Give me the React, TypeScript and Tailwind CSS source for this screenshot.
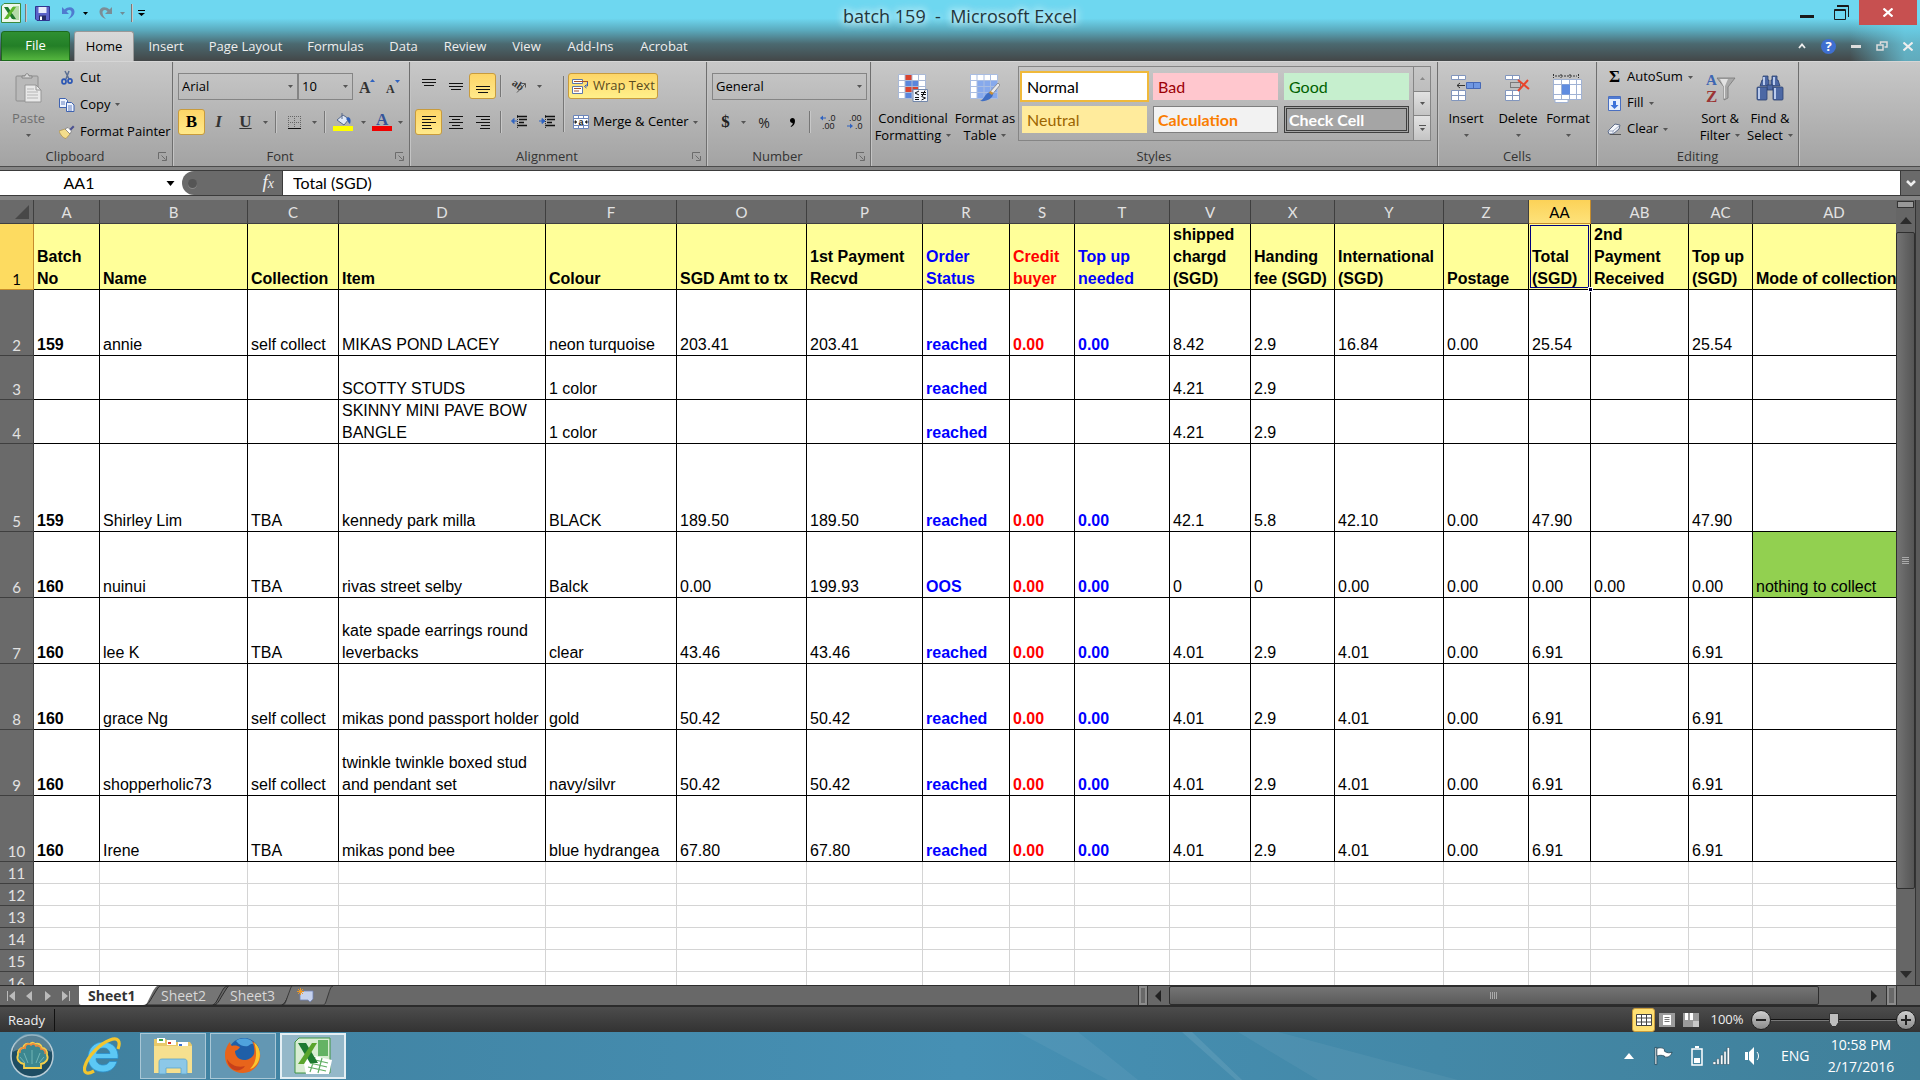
import React from 'react';
import clsx from 'clsx';

/* ---------- data ---------- */

const tabs = [
    { label: 'Insert', width: 'w-[60px]' },
    { label: 'Page Layout', width: 'w-[99px]' },
    { label: 'Formulas', width: 'w-[81px]' },
    { label: 'Data', width: 'w-[55px]' },
    { label: 'Review', width: 'w-[68px]' },
    { label: 'View', width: 'w-[55px]' },
    { label: 'Add-Ins', width: 'w-[73px]' },
    { label: 'Acrobat', width: 'w-[74px]' },
];

const columns = [
    { id: 'A', width: 'w-[66px]', title: 'Batch\nNo' },
    { id: 'B', width: 'w-[148px]', title: 'Name' },
    { id: 'C', width: 'w-[91px]', title: 'Collection' },
    { id: 'D', width: 'w-[207px]', title: 'Item' },
    { id: 'F', width: 'w-[131px]', title: 'Colour' },
    { id: 'O', width: 'w-[130px]', title: 'SGD Amt to tx' },
    { id: 'P', width: 'w-[116px]', title: '1st Payment\nRecvd' },
    { id: 'R', width: 'w-[87px]', title: 'Order\nStatus' },
    { id: 'S', width: 'w-[65px]', title: 'Credit\nbuyer' },
    { id: 'T', width: 'w-[95px]', title: 'Top up\nneeded' },
    { id: 'V', width: 'w-[81px]', title: 'shipped\nchargd\n(SGD)' },
    { id: 'X', width: 'w-[84px]', title: 'Handing\nfee (SGD)' },
    { id: 'Y', width: 'w-[109px]', title: 'International\n(SGD)' },
    { id: 'Z', width: 'w-[85px]', title: 'Postage' },
    { id: 'AA', width: 'w-[62px]', title: 'Total\n(SGD)' },
    { id: 'AB', width: 'w-[98px]', title: '2nd\nPayment\nReceived' },
    { id: 'AC', width: 'w-[64px]', title: 'Top up\n(SGD)' },
    { id: 'AD', width: '', title: 'Mode of collection' },
];

const rows = [
    { n: 2, h: 'h-[66px]', cells: ['159', 'annie', 'self collect', 'MIKAS POND LACEY', 'neon turquoise', '203.41', '203.41', 'reached', '0.00', '0.00', '8.42', '2.9', '16.84', '0.00', '25.54', '', '25.54', ''] },
    { n: 3, h: 'h-[44px]', cells: ['', '', '', 'SCOTTY STUDS', '1 color', '', '', 'reached', '', '', '4.21', '2.9', '', '', '', '', '', ''] },
    { n: 4, h: 'h-[44px]', cells: ['', '', '', 'SKINNY MINI PAVE BOW\nBANGLE', '1 color', '', '', 'reached', '', '', '4.21', '2.9', '', '', '', '', '', ''] },
    { n: 5, h: 'h-[88px]', cells: ['159', 'Shirley Lim', 'TBA', 'kennedy park milla', 'BLACK', '189.50', '189.50', 'reached', '0.00', '0.00', '42.1', '5.8', '42.10', '0.00', '47.90', '', '47.90', ''] },
    { n: 6, h: 'h-[66px]', cells: ['160', 'nuinui', 'TBA', 'rivas street selby', 'Balck', '0.00', '199.93', 'OOS', '0.00', '0.00', '0', '0', '0.00', '0.00', '0.00', '0.00', '0.00', 'nothing to collect'] },
    { n: 7, h: 'h-[66px]', cells: ['160', 'lee K', 'TBA', 'kate spade earrings round\nleverbacks', 'clear', '43.46', '43.46', 'reached', '0.00', '0.00', '4.01', '2.9', '4.01', '0.00', '6.91', '', '6.91', ''] },
    { n: 8, h: 'h-[66px]', cells: ['160', 'grace Ng', 'self collect', 'mikas pond passport holder', 'gold', '50.42', '50.42', 'reached', '0.00', '0.00', '4.01', '2.9', '4.01', '0.00', '6.91', '', '6.91', ''] },
    { n: 9, h: 'h-[66px]', cells: ['160', 'shopperholic73', 'self collect', 'twinkle twinkle boxed stud\nand pendant set', 'navy/silvr', '50.42', '50.42', 'reached', '0.00', '0.00', '4.01', '2.9', '4.01', '0.00', '6.91', '', '6.91', ''] },
    { n: 10, h: 'h-[66px]', cells: ['160', 'Irene', 'TBA', 'mikas pond bee', 'blue hydrangea', '67.80', '67.80', 'reached', '0.00', '0.00', '4.01', '2.9', '4.01', '0.00', '6.91', '', '6.91', ''] },
];

const emptyRows = [11, 12, 13, 14, 15, 16];

const colourOf = (id: string) => {
    if (id === 'R' || id === 'T') return 'text-[#0000ff]';
    if (id === 'S') return 'text-[#ff0000]';
    return 'text-black';
};

const isBold = (id: string) => ['A', 'R', 'S', 'T'].includes(id);

/* ---------- small pieces ---------- */

const Arrow = ({ className = 'text-[#555]' }: { className?: string }) => (
    <svg viewBox="0 0 5 3" className={clsx('h-[3px] w-[5px] shrink-0', className)} fill="currentColor">
        <path d="M0 0h5L2.5 3z" />
    </svg>
);

const Sep = ({ className = 'h-[22px]' }: { className?: string }) => (
    <span className={clsx('w-px shrink-0 bg-[#777] shadow-[1px_0_0_#c8c8c8]', className)} />
);

const Launcher = () => (
    <svg viewBox="0 0 9 9" className="h-[9px] w-[9px]" fill="none" stroke="#6b6b6b">
        <path d="M.5 7V.5H8M3.5 3.5l4 4M8.5 4v4.500H4" />
    </svg>
);

interface GroupProps {
    title: string;
    width: string;
    launcher?: boolean;
    children: React.ReactNode;
}

const Group: React.FC<GroupProps> = ({ title, width, launcher, children }) => (
    <section className={clsx('flex shrink-0 flex-col border-r border-[#6f6f6f] shadow-[1px_0_0_#c4c4c4]', width)}>
        <div className="flex h-[85px]">{children}</div>
        <div className="flex h-[20px] items-center text-[#333]">
            <span className="flex-1 text-center leading-[20px]">{title}</span>
            {launcher && (
                <span className="flex w-[22px] justify-end pr-[5px]">
                    <button aria-label={`${title} options`}><Launcher /></button>
                </span>
            )}
        </div>
    </section>
);

const BigButton = ({ icon, lines, arrow, width, dim }: { icon: React.ReactNode; lines: string[]; arrow?: boolean; width: string; dim?: boolean }) => (
    <button className={clsx('flex shrink-0 flex-col items-center pt-[10px] leading-[17px]', width, dim ? 'text-[#6f6f6f]' : 'text-black')}>
        <span className="mb-[6px] flex h-[32px] items-center">{icon}</span>
        <span className="whitespace-nowrap">{lines[0]}</span>
        <span className="flex h-[17px] items-center gap-[5px] whitespace-nowrap">
            {lines[1]}
            {arrow && <Arrow />}
        </span>
    </button>
);

const ToolButton = ({ label, active, width = 'w-[27px]', children }: { label: string; active?: boolean; width?: string; children: React.ReactNode }) => (
    <button
        aria-label={label}
        className={clsx(
            'flex h-[26px] shrink-0 items-center justify-center rounded-[3px] border',
            width,
            active ? 'border-[#c89b3c] bg-linear-to-b from-[#fdd567] to-[#ffe98a]' : 'border-transparent'
        )}
    >
        {children}
    </button>
);

const Combo = ({ label, value, width }: { label: string; value: string; width: string }) => (
    <label className={clsx('relative flex h-[27px] items-center border border-[#858585]', width)}>
        <select aria-label={label} className="h-full w-full appearance-none bg-transparent pl-[3px] leading-[17px] text-black outline-none">
            <option>{value}</option>
        </select>
        <span className="pointer-events-none absolute right-[4px] flex"><Arrow /></span>
    </label>
);

/* ---------- icons ---------- */

const Lines = ({ d }: { d: string }) => (
    <svg viewBox="0 0 16 14" className="h-[14px] w-[16px]" stroke="#111" strokeWidth="1" fill="none">
        <path d={d} />
    </svg>
);

const ExcelLogo = ({ className }: { className: string }) => (
    <svg viewBox="0 0 20 20" className={className}>
        <path d="M3 .5h16.500v19H.5V3z" fill="#eef7ec" stroke="#3c8a3c" />
        <path d="M12 3h6v14h-6z" fill="#b5dba8" />
        <path d="M3 4h4l8 12h-4z" fill="#1f7a2e" />
        <path d="M11.500 4H15L7 16H3z" fill="#5cb52d" />
    </svg>
);

const SaveIcon = () => (
    <svg viewBox="0 0 15 15" className="h-[15px] w-[15px]">
        <path d="M.5.5h14v14H2L.5 13z" fill="#5a62c8" stroke="#30358f" />
        <path d="M3.500 1h8v6h-8z" fill="#e8ecfa" />
        <path d="M4 9.500h7V14H4z" fill="#262b66" />
        <path d="M5 10.500h2V14H5z" fill="#fff" />
    </svg>
);

const UndoIcon = ({ color, flip }: { color: string; flip?: boolean }) => (
    <svg viewBox="0 0 13 14" className={clsx('h-[14px] w-[13px]', flip && '-scale-x-100')}>
        <path d="M0 1v7h7L4.500 5.500C7 3 9.500 4 9.500 6.500c0 2.500-1.500 4.500-3.500 6.500 4-1.500 6.500-4 6.500-7.500C12.500 1 6.500-.5 2.500 3.500z" fill={color} />
    </svg>
);

const PasteIcon = () => (
    <svg viewBox="0 0 28 30" className="h-[30px] w-[28px]">
        <rect x="1" y="3" width="22" height="25" rx="1" fill="#b9b9b9" stroke="#8e8e8e" />
        <path d="M7 5V3h3c0-3 4-3 4 0h3v2z" fill="#d8d8d8" stroke="#858585" />
        <path d="M10 12h11l5 5v12H10z" fill="#e9e9e9" stroke="#969696" />
        <path d="M21 12v5h5" fill="none" stroke="#969696" />
        <path d="M12 16h7M12 19h11M12 22h11M12 25h11" stroke="#b5b5b5" />
    </svg>
);

const CutIcon = () => (
    <svg viewBox="0 0 15 15" className="h-[15px] w-[15px]" fill="none">
        <path d="M5 1l4 8M9 1L6 9" stroke="#5b6f93" strokeWidth="1.500" />
        <ellipse cx="4" cy="11.500" rx="2" ry="2.400" stroke="#2c57b4" strokeWidth="1.700" />
        <ellipse cx="10" cy="11" rx="2" ry="2.200" stroke="#2c57b4" strokeWidth="1.700" />
    </svg>
);

const CopyIcon = () => (
    <svg viewBox="0 0 16 14" className="h-[14px] w-[16px]" fill="#eef3fd" stroke="#3f63b0">
        <path d="M.5.5h6l2 2v7h-8z" />
        <path d="M2 4h4M2 6h4" strokeWidth=".8" />
        <path d="M7.500 4.500h5l2.500 2.500v6.500H7.500z" />
        <path d="M9 8h4M9 10h4M9 12h4" strokeWidth=".8" />
    </svg>
);

const PainterIcon = () => (
    <svg viewBox="0 0 16 14" className="h-[14px] w-[16px]">
        <path d="M0 6l6-2 5 5-4 4.500C4 13 1.500 10 0 6z" fill="#f3dd8c" stroke="#a8873c" strokeWidth=".6" />
        <path d="M6 4l3-1.500L12.500 6 11 9z" fill="#fff" stroke="#666" strokeWidth=".6" />
        <path d="M10.500 4L14 .5 15.500 2 12 5.500z" fill="#4a5090" />
    </svg>
);

const GrowIcon = ({ up }: { up?: boolean }) => (
    <svg viewBox="0 0 16 16" className="h-[16px] w-[16px] overflow-visible">
        <text x="0" y="14" fontSize={up ? 16 : 12} fontFamily="Liberation Serif, serif" fontWeight="bold" fill="#333">A</text>
        {up ? <path d="M11 3h5l-2.500-3z" fill="#2f62c0" /> : <path d="M9 1h5l-2.500 3z" fill="#2f62c0" />}
    </svg>
);

const BorderIcon = () => (
    <svg viewBox="0 0 13 13" className="h-[13px] w-[13px]" stroke="#666" fill="none">
        <path d="M.5 0v12M6.500 0v12M12.500 0v12M0 .5h13M0 6.500h13" strokeDasharray="1 1" />
        <path d="M0 12.500h13" stroke="#111" />
    </svg>
);

const FillIcon = () => (
    <svg viewBox="0 0 20 18" className="h-[18px] w-[20px]">
        <path d="M4 7l6-5 6 4-5 6z" fill="#dfe8f7" stroke="#56698c" />
        <path d="M9 0v6" stroke="#56698c" />
        <path d="M15 4c3 1 3 4 2 7-2-1-2-4-4-5z" fill="#2f5fb8" />
        <path d="M0 13h20v5H0z" fill="#ffff00" />
    </svg>
);

const FontColourIcon = () => (
    <svg viewBox="0 0 20 18" className="h-[18px] w-[20px] overflow-visible">
        <text x="4" y="12" fontSize="17" fontFamily="Liberation Serif, serif" fontWeight="bold" fill="#35549a">A</text>
        <path d="M0 13h20v5H0z" fill="#f00000" />
    </svg>
);

const OrientIcon = () => (
    <svg viewBox="0 0 16 14" className="h-[14px] w-[16px] overflow-visible">
        <text x="0" y="8" fontSize="11" fontFamily="Liberation Serif, serif" fontWeight="bold" fill="#333" transform="rotate(35 4 7)">ab</text>
        <path d="M6 13.500L14 5M14.500 4.500v4M14.500 4.500h-4" stroke="#555" fill="none" />
    </svg>
);

const IndentIcon = ({ right }: { right?: boolean }) => (
    <svg viewBox="0 0 16 14" className="h-[14px] w-[16px]" fill="none">
        <path d="M6 1.500h10M8 4.500h8M8 7.500h5M6 10.500h10" stroke="#111" strokeWidth="1.400" />
        <path d="M6.500 0v14" stroke="#333" strokeDasharray="1 1" />
        {right ? <path d="M0 6h3M3 3.500L6 6 3 8.500z" stroke="#2f62c0" fill="#2f62c0" /> : <path d="M3 6h3M3 3.500L.5 6 3 8.500z" stroke="#2f62c0" fill="#2f62c0" />}
    </svg>
);

const WrapIcon = () => (
    <svg viewBox="0 0 17 15" className="h-[15px] w-[17px]">
        <path d="M.5.5h10v4H.5zM.5 7.500h10v7H.5z" fill="#fff" stroke="#5d76a8" />
        <path d="M2 2.500h14" stroke="#a6532a" />
        <path d="M2 9.500h7M2 12h5" stroke="#a6532a" />
        <path d="M15.500 3v4h-2M14.500 5.500L12.500 7.500l2 1.500" stroke="#3a5db0" fill="none" />
    </svg>
);

const MergeIcon = () => (
    <svg viewBox="0 0 16 14" className="h-[14px] w-[16px]">
        <path d="M.5.5h15v13H.5zM.5 3.500h15M.5 10.500h15M5.500.5v3M10.500.5v3M5.500 10.500v3M10.500 10.500v3" fill="#fff" stroke="#6c86bb" />
        <path d="M0 7h3M13 7h3M2 5.500L4 7 2 8.500zM14 5.500L12 7l2 1.500z" stroke="#222" strokeWidth=".6" fill="#222" />
        <text x="5.500" y="9.500" fontSize="9" fontFamily="Liberation Sans, sans-serif" fontWeight="bold" fill="#222">a</text>
    </svg>
);

const DecimalIcon = ({ more }: { more?: boolean }) => (
    <svg viewBox="0 0 16 14" className="h-[14px] w-[16px] overflow-visible" fontSize="9" fontFamily="Liberation Sans, sans-serif" fill="#222">
        <text x={more ? 8 : 2} y="6">{more ? '.0' : '.00'}</text>
        <text x={more ? 2 : 8} y="14">{more ? '.00' : '.0'}</text>
        {more ? <path d="M0 3l3-2.500v2h3v1H3v2z" fill="#2f62c0" /> : <path d="M6 11L3 8.500v2H0v1h3v2z" fill="#2f62c0" />}
    </svg>
);

const CondIcon = () => (
    <svg viewBox="0 0 30 28" className="h-[28px] w-[30px]">
        <path d="M.5.5h27v24H.5z" fill="#fff" />
        <path d="M7 0h7v6H7zM7 12h13v6H7z" fill="#d9432d" />
        <path d="M7 6h13v6H7zM7 18h7v6H7z" fill="#5a86dc" />
        <path d="M.5.5h27v24H.5zM7 .5v24M14 .5v24M20.500.5v24M.5 6.500h27M.5 12.500h27M.5 18.500h27" fill="none" stroke="#a9b9d6" />
        <path d="M15 15.500h14.500v12H15z" fill="#f5f8fd" stroke="#7287ab" />
        <path d="M21 17l-4 2 4 2M17 23.500h4M17 25.500h4M23 18.500h5M23 20.500h5M27 16.500l-3 6M23.500 22.500l4 1.500-4 2" stroke="#111" fill="none" />
    </svg>
);

const TableIcon = () => (
    <svg viewBox="0 0 30 28" className="h-[28px] w-[30px]">
        <path d="M.5.5h27v24H.5z" fill="#fff" />
        <path d="M7 6h21v19H7z" fill="#86a9ec" />
        <path d="M.5.5h27v24H.5zM7 .5v24M14 .5v24M20.500.5v24M.5 6.500h27M.5 12.500h27M.5 18.500h27" fill="none" stroke="#a9bde2" />
        <path d="M28 9l2 2-9 11-3-2z" fill="#e9e9ea" stroke="#777" strokeWidth=".7" />
        <path d="M20 18l3 2c0 4-6 8-13 7 4-1 5-8 10-9z" fill="#3f6ec4" />
        <path d="M20.500 17l3 2-1.500 2-3-2z" fill="#c98f36" />
    </svg>
);

const InsertIcon = () => (
    <svg viewBox="0 0 30 26" className="h-[26px] w-[30px]" fill="#fff" stroke="#8296bd">
        <path d="M.5.5h14v4H.5zM7.500.5v4M.5 15.500h14v10H.5zM7.500 15.500v10M.5 20.500h14" />
        <path d="M15.500 7.500h14v6h-14zM22.500 7.500v6" fill="#6f97e2" stroke="#4668b5" />
        <path d="M6 10.500h8M9 8l-3 2.500L9 13" fill="none" stroke="#333" />
    </svg>
);

const DeleteIcon = () => (
    <svg viewBox="0 0 26 26" className="h-[26px] w-[26px]" fill="#fff" stroke="#8296bd">
        <path d="M.5.5h14v4H.5zM7.500.5v4M.5 15.500h14v10H.5zM7.500 15.500v10M.5 20.500h14" />
        <path d="M5.500 7.500h10v5h-10z" fill="none" stroke="#333" strokeDasharray="1 1" />
        <path d="M13 5l11 9M23 5L13 16" stroke="#e8452c" strokeWidth="2" />
    </svg>
);

const FormatIcon = () => (
    <svg viewBox="0 0 30 29" className="h-[29px] w-[30px]" fill="#fff" stroke="#a0b2d4">
        <path d="M.5 5.500h28v20H.5zM8.500 5.500v20M16.500 5.500v20M23.500 5.500v20M.5 10.500h28M.5 20.500h28M2 25.500v3h13v-3" />
        <path d="M9 10.500h8v10H9z" fill="#5f8ce0" stroke="none" />
        <path d="M.5 0v4M25.500 0v4M2 2h22M8 0v4M17 0v4" fill="none" stroke="#333" strokeDasharray="2 1" />
    </svg>
);

const FillDownIcon = () => (
    <svg viewBox="0 0 13 15" className="h-[15px] w-[13px]">
        <path d="M.5.5h12v14H.5z" fill="#e7effc" stroke="#4a6fc0" />
        <path d="M1 1h11v2H1z" fill="#4f7bd4" />
        <path d="M5 5h3v4h2.500l-4 4-4-4H5z" fill="#3d72d8" />
    </svg>
);

const ClearIcon = () => (
    <svg viewBox="0 0 15 12" className="h-[12px] w-[15px]">
        <path d="M1 8l7-7 5 1-1 4-6 5H2z" fill="#f4f6fb" stroke="#5e6c88" />
        <path d="M1 8h5l6-5M6 8v3" fill="none" stroke="#8b9ab8" strokeWidth=".8" />
        <path d="M3 11.500h11" stroke="#555" />
    </svg>
);

const SortIcon = () => (
    <svg viewBox="0 0 29 30" className="h-[30px] w-[29px] overflow-visible" fontFamily="Liberation Serif, serif" fontWeight="bold">
        <path d="M11 5h18l-7 9v11l-4 2V14z" fill="#a9a9a9" stroke="#777" strokeWidth=".8" />
        <path d="M14 6h8l-3 7v12l-1 1V14z" fill="#e2e2e2" />
        <text x="0" y="12" fontSize="15" fill="#3e66b2">A</text>
        <text x="0" y="29" fontSize="17" fill="#9b3434">Z</text>
    </svg>
);

const FindIcon = () => (
    <svg viewBox="0 0 28 26" className="h-[26px] w-[28px]" fill="#4c68a4" stroke="#283f70" strokeWidth=".8">
        <path d="M7 1h5v4h1v6H4l2-6h1zM16 1h5v4h1l2 6h-9V5h1z" />
        <path d="M11 10h6v5h-6z" />
        <rect x="1" y="12" width="10" height="13" rx="1" />
        <rect x="17" y="12" width="10" height="13" rx="1" />
        <path d="M3 13v11M19 13v11M8 2v8M18 2v8" stroke="#b9caec" strokeWidth="2" />
    </svg>
);

/* ---------- title bar ---------- */

const TitleBar = () => (
    <header className="relative shrink-0 bg-[linear-gradient(to_right,transparent_calc(100%-70px),#6ed7f0b0_calc(100%-15px)),linear-gradient(to_bottom,#6ed7f0_30%,#5aa9bc_50%,#4b6970_72%,#434748)]">
        <div className="flex h-[31px] justify-between">
            <div className="flex h-[26px] w-[490px] items-center pl-px">
                <ExcelLogo className="h-[20px] w-[20px]" />
                <Sep className="mx-[4px] h-[18px]" />
                <div className="flex items-center pl-[5px]">
                    <button aria-label="Save"><SaveIcon /></button>
                    <button aria-label="Undo" className="ml-[12px]"><UndoIcon color="#4f7bd0" /></button>
                    <span className="ml-[8px]"><Arrow className="text-black" /></span>
                    <button aria-label="Redo" className="ml-[11px]"><UndoIcon color="#7b8d96" flip /></button>
                    <span className="ml-[8px]"><Arrow className="text-[#6f8c96]" /></span>
                </div>
                <Sep className="mx-[6px] h-[18px]" />
                <button aria-label="Customize Quick Access Toolbar">
                    <svg viewBox="0 0 7 6" className="h-[6px] w-[7px]"><path d="M0 0h7v1H0zM0 3h7L3.500 6z" /></svg>
                </button>
            </div>
            <h1 className="pt-[5px] text-[18px] leading-[22px] text-[#22363c] [text-shadow:0_0_8px_#fff,0_0_8px_#e8fbff]">batch 159 &nbsp;-&nbsp; Microsoft Excel</h1>
            <div className="flex w-[490px] justify-end pr-[3px] text-[#1a1a1a]">
                <button aria-label="Minimize" className="flex h-[25px] w-[32px] items-start justify-center pt-[15px]">
                    <span className="h-[3px] w-[14px] bg-current" />
                </button>
                <button aria-label="Restore" className="flex h-[25px] w-[36px] items-center justify-center">
                    <svg viewBox="0 0 15 15" className="h-[15px] w-[15px]" fill="none" stroke="currentColor"><path d="M.5 4.500h11v10H.5zM0 5.500h12M3 .5h11.500V12M3 1.500h12" /></svg>
                </button>
                <button aria-label="Close" className="flex h-[25px] w-[58px] items-center justify-center bg-[#c75050]">
                    <svg viewBox="0 0 10 9" className="h-[9px] w-[10px]" stroke="#fff" strokeWidth="2.200"><path d="M.5.5l9 8M9.500.5l-9 8" /></svg>
                </button>
            </div>
        </div>

        <nav className="flex h-[30px] items-end text-[#eee]">
            <button className="ml-px h-[30px] w-[69px] rounded-t-[3px] border border-[#1c6b1c] bg-linear-to-b from-[#2f9032] via-[#237f27] to-[#54b53e] text-white">File</button>
            <button className="ml-[4px] h-[30px] w-[60px] rounded-t-[3px] border border-b-0 border-[#999] bg-linear-to-b from-[#d9d9d9] to-[#c9c9c9] text-black">Home</button>
            {tabs.map((t, i) => (
                <button key={t.label} className={clsx('h-[30px] shrink-0 pt-[2px] text-center', t.width, i === 0 && 'ml-[2px]')}>{t.label}</button>
            ))}
            <div className="ml-auto flex h-[30px] items-center gap-[15px] pr-[7px]">
                <button aria-label="Minimize ribbon">
                    <svg viewBox="0 0 8 6" className="h-[6px] w-[8px]" stroke="#eee" strokeWidth="1.800" fill="none"><path d="M1 5l3-3.500L7 5" /></svg>
                </button>
                <button aria-label="Help" className="flex h-[15px] w-[15px] items-center justify-center rounded-full bg-[#3f6fd0] text-[13px] font-bold leading-[15px] text-white">?</button>
                <button aria-label="Minimize workbook"><span className="block h-[3px] w-[10px] bg-[#ddd]" /></button>
                <button aria-label="Restore workbook">
                    <svg viewBox="0 0 12 10" className="h-[10px] w-[12px]" fill="none" stroke="#ddd" strokeWidth="1.500"><path d="M1 4h6v5H1zM4.500 3V1H11v5H8.500" /></svg>
                </button>
                <button aria-label="Close workbook">
                    <svg viewBox="0 0 10 9" className="h-[9px] w-[10px]" stroke="#eee" strokeWidth="2"><path d="M.5.5l9 8M9.500.5l-9 8" /></svg>
                </button>
            </div>
        </nav>
    </header>
);

/* ---------- ribbon ---------- */

const Ribbon = () => (
    <div className="flex h-[106px] shrink-0 border-t border-b border-t-[#d6d6d6] border-b-[#4c4c4c] bg-linear-to-b from-[#c8c8c8] to-[#a3a3a3]">
        <Group title="Clipboard" width="w-[173px]" launcher>
            <BigButton icon={<PasteIcon />} lines={['Paste', '']} arrow dim width="w-[57px]" />
            <div className="flex flex-col pt-[2px]">
                {[
                    { label: 'Cut', icon: <CutIcon /> },
                    { label: 'Copy', icon: <CopyIcon />, arrow: true },
                    { label: 'Format Painter', icon: <PainterIcon /> },
                ].map(({ label, icon, arrow }) => (
                    <button key={label} className="flex h-[27px] items-center gap-[5px] whitespace-nowrap pl-[2px]">
                        <span className="flex w-[16px] justify-center">{icon}</span>
                        {label}
                        {arrow && <Arrow />}
                    </button>
                ))}
            </div>
        </Group>

        <Group title="Font" width="w-[237px]" launcher>
            <div className="flex flex-col gap-[9px] pl-[5px] pt-[11px]">
                <div className="flex items-center">
                    <Combo label="Font" value="Arial" width="w-[120px]" />
                    <Combo label="Font size" value="10" width="w-[55px]" />
                    <ToolButton label="Increase font size"><GrowIcon up /></ToolButton>
                    <ToolButton label="Decrease font size"><GrowIcon /></ToolButton>
                </div>
                <div className="flex items-center font-['Liberation_Serif',serif] text-[17px] leading-[22px]">
                    <ToolButton label="Bold" active><b>B</b></ToolButton>
                    <ToolButton label="Italic"><i className="font-bold text-[#333]">I</i></ToolButton>
                    <ToolButton label="Underline"><span className="font-bold text-[#333] underline">U</span></ToolButton>
                    <span className="px-[4px]"><Arrow /></span>
                    <span className="w-[3px]" />
                    <Sep />
                    <ToolButton label="Borders" width="w-[36px]"><BorderIcon /></ToolButton>
                    <Arrow />
                    <span className="w-[7px]" />
                    <Sep />
                    <ToolButton label="Fill color" width="w-[36px]"><FillIcon /></ToolButton>
                    <Arrow />
                    <ToolButton label="Font color" width="w-[32px]"><FontColourIcon /></ToolButton>
                    <Arrow />
                </div>
            </div>
        </Group>

        <Group title="Alignment" width="w-[297px]" launcher>
            <div className="flex flex-col gap-[10px] pl-[5px] pt-[11px]">
                <div className="flex items-center">
                    <ToolButton label="Top align"><Lines d="M1 .5h14M1 3.500h14M3 6.500h10" /></ToolButton>
                    <ToolButton label="Middle align"><Lines d="M1 4.500h14M1 7.500h14M3 10.500h10" /></ToolButton>
                    <ToolButton label="Bottom align" active><Lines d="M1 7.500h14M1 10.500h14M3 13.500h10" /></ToolButton>
                    <span className="w-[4px]" />
                    <Sep />
                    <ToolButton label="Orientation" width="w-[36px]"><OrientIcon /></ToolButton>
                    <Arrow />
                </div>
                <div className="flex items-center">
                    <ToolButton label="Align left" active><Lines d="M1 1.500h14M1 4.500h9M1 7.500h14M1 10.500h9M1 13.500h10" /></ToolButton>
                    <ToolButton label="Center"><Lines d="M1 1.500h14M4 4.500h8M1 7.500h14M4 10.500h8M1 13.500h14" /></ToolButton>
                    <ToolButton label="Align right"><Lines d="M1 1.500h14M6 4.500h9M1 7.500h14M6 10.500h9M5 13.500h10" /></ToolButton>
                    <span className="w-[4px]" />
                    <Sep />
                    <ToolButton label="Decrease indent" width="w-[36px]"><IndentIcon /></ToolButton>
                    <ToolButton label="Increase indent" width="w-[20px]"><IndentIcon right /></ToolButton>
                </div>
            </div>
            <div className="flex pt-[14px] pl-[6px]"><Sep className="h-[56px]" /></div>
            <div className="flex flex-col items-start gap-[10px] pl-[4px] pt-[11px]">
                <button className="flex h-[26px] w-[90px] items-center gap-[4px] whitespace-nowrap rounded-[3px] border border-[#c89b3c] bg-linear-to-b from-[#fdd567] to-[#fff08a] pl-[3px] text-[#5a4a20]">
                    <WrapIcon />Wrap Text
                </button>
                <button className="flex h-[26px] items-center gap-[4px] whitespace-nowrap pl-[5px]">
                    <MergeIcon />Merge &amp; Center<Arrow />
                </button>
            </div>
        </Group>

        <Group title="Number" width="w-[164px]" launcher>
            <div className="flex flex-col gap-[9px] pl-[5px] pt-[11px]">
                <Combo label="Number format" value="General" width="w-[155px]" />
                <div className="flex items-center text-[#222]">
                    <ToolButton label="Accounting format"><span className="font-['Liberation_Serif',serif] text-[17px] font-bold">$</span></ToolButton>
                    <span className="w-[2px]" />
                    <Arrow />
                    <ToolButton label="Percent style" width="w-[36px]"><span className="text-[14px]">%</span></ToolButton>
                    <ToolButton label="Comma style" width="w-[20px]">
                        <svg viewBox="0 0 5 9" className="h-[9px] w-[5px]"><path d="M2.500 0C4 0 5 1 5 3c0 3-1.500 5-4 6l-.3-.8C2 7.500 2.700 6.500 2.700 5 1 5 0 4 0 2.600 0 1 1 0 2.500 0z" /></svg>
                    </ToolButton>
                    <span className="w-[7px]" />
                    <Sep />
                    <ToolButton label="Increase decimal" width="w-[36px]"><DecimalIcon more /></ToolButton>
                    <ToolButton label="Decrease decimal" width="w-[17px]"><DecimalIcon /></ToolButton>
                </div>
            </div>
        </Group>

        <Group title="Styles" width="w-[567px]">
            <BigButton icon={<CondIcon />} lines={['Conditional', 'Formatting']} arrow width="w-[84px]" />
            <BigButton icon={<TableIcon />} lines={['Format as', 'Table']} arrow width="w-[60px]" />
            <div className="ml-[3px] mt-[4px] flex h-[75px] w-[413px] border border-[#858585] font-['Lato','Open_Sans',sans-serif] text-[16px] leading-[25px]">
                <div className="grid flex-1 grid-cols-[125px_125px_125px] content-start gap-x-[6px] gap-y-[6px] pl-[3px] pt-[6px] text-left">
                    <button className="h-[27px] bg-white pl-[5px] text-left text-black outline-2 outline-[#f0b93a]">Normal</button>
                    <button className="h-[27px] bg-[#ffc7ce] pl-[5px] text-left text-[#9c0006]">Bad</button>
                    <button className="h-[27px] bg-[#c6efce] pl-[5px] text-left text-[#006100]">Good</button>
                    <button className="h-[27px] bg-[#ffeb9c] pl-[5px] text-left text-[#9c6500]">Neutral</button>
                    <button className="h-[27px] border border-[#7f7f7f] bg-[#f2f2f2] pl-[4px] text-left font-bold text-[#fa7d00]">Calculation</button>
                    <button className="h-[27px] border-[3px] border-double border-[#3f3f3f] bg-[#a5a5a5] pl-[2px] text-left font-bold leading-[21px] text-white">Check Cell</button>
                </div>
                <div className="flex w-[17px] flex-col border-l border-[#858585]">
                    <button aria-label="Styles up" className="flex flex-1 items-center justify-center"><svg viewBox="0 0 5 3" className="h-[3px] w-[5px]" fill="#888"><path d="M0 3h5L2.500 0z" /></svg></button>
                    <button aria-label="Styles down" className="flex flex-1 items-center justify-center border-y border-[#858585] bg-linear-to-b from-[#e2e2e2] to-[#c4c4c4]"><Arrow /></button>
                    <button aria-label="More styles" className="flex flex-1 flex-col items-center justify-center gap-[2px] bg-linear-to-b from-[#e2e2e2] to-[#c4c4c4]"><span className="h-px w-[7px] bg-[#555]" /><Arrow /></button>
                </div>
            </div>
        </Group>

        <Group title="Cells" width="w-[159px]">
            <BigButton icon={<InsertIcon />} lines={['Insert', '']} arrow width="w-[56px]" />
            <BigButton icon={<DeleteIcon />} lines={['Delete', '']} arrow width="w-[48px]" />
            <BigButton icon={<FormatIcon />} lines={['Format', '']} arrow width="w-[52px]" />
        </Group>

        <Group title="Editing" width="w-[202px]">
            <div className="flex w-[98px] flex-col pl-[10px] pt-[2px]">
                {[
                    { label: 'AutoSum', icon: <span className="font-['Liberation_Serif',serif] text-[17px] font-bold">Σ</span> },
                    { label: 'Fill', icon: <FillDownIcon /> },
                    { label: 'Clear', icon: <ClearIcon /> },
                ].map(({ label, icon }) => (
                    <button key={label} className="flex h-[26px] items-center gap-[5px] whitespace-nowrap">
                        <span className="flex w-[15px] justify-center">{icon}</span>
                        {label}
                        <Arrow />
                    </button>
                ))}
            </div>
            <BigButton icon={<SortIcon />} lines={['Sort &', 'Filter']} arrow width="w-[50px]" />
            <BigButton icon={<FindIcon />} lines={['Find &', 'Select']} arrow width="w-[50px]" />
        </Group>
    </div>
);

/* ---------- formula bar ---------- */

const FormulaBar = () => (
    <div className="shrink-0 bg-[#858585] pt-[3px] pb-[4px]">
        <div className="flex h-[26px] border-y border-[#3b3b3b] bg-[#6a6a6a] font-['Lato','Open_Sans',sans-serif] text-[16px]">
            <div className="flex w-[282px] items-center bg-white">
                <input aria-label="Name box" defaultValue="AA1" className="w-[158px] bg-transparent text-center text-black outline-none" />
                <span className="flex w-[24px] justify-center">
                    <svg viewBox="0 0 8 5" className="h-[5px] w-[9px]"><path d="M0 0h8L4 5z" /></svg>
                </span>
                <div className="flex h-full flex-1 items-center justify-between rounded-l-full bg-[#6a6a6a] pl-[6px] pr-[8px]">
                    <span className="h-[9px] w-[9px] rounded-full bg-[#555] shadow-[0_1px_0_#888]" />
                    <button className="font-['Liberation_Serif',serif] text-[19px] italic leading-[20px] text-[#eee]">f<span className="text-[14px]">x</span></button>
                </div>
            </div>
            <input aria-label="Formula" defaultValue="Total (SGD)" className="flex-1 border-l border-[#3b3b3b] bg-white pl-[10px] text-black outline-none" />
            <button aria-label="Expand formula bar" className="flex w-[20px] items-center justify-center border-l border-[#3b3b3b]">
                <svg viewBox="0 0 10 7" className="h-[7px] w-[10px]" fill="none" stroke="#eee" strokeWidth="2.500"><path d="M1 1l4 4 4-4" /></svg>
            </button>
        </div>
    </div>
);

/* ---------- sheet ---------- */

const rowHead = "border-b border-r border-[#3f3f3f] bg-[#6a6a6a] p-0 font-['Lato','Open_Sans',sans-serif] text-[15px] font-normal text-[#e2e2e2]";

const Sheet = () => (
    <div className="min-w-0 flex-1 overflow-hidden bg-white">
        {/* last column runs on under the scroll bar */}
        <table className="w-[calc(100%+20px)] table-fixed border-separate border-spacing-0 font-['Liberation_Sans',Arial,sans-serif] text-[16px] leading-[22px]">
            <thead>
                <tr>
                    <th className={clsx(rowHead, 'w-[34px]')}>
                        <div className="flex h-[23px] items-end justify-end p-[4px]">
                            <svg viewBox="0 0 14 14" className="h-[14px] w-[14px]" fill="#484848"><path d="M14 0v14H0z" /></svg>
                        </div>
                    </th>
                    {columns.map((c) => (
                        <th
                            key={c.id}
                            className={clsx(
                                "border-b border-r p-0 font-['Lato','Open_Sans',sans-serif] text-[15px] font-normal leading-[24px]",
                                c.width,
                                c.id === 'AA' ? 'border-[#c58c2c] bg-linear-to-b from-[#fcd257] to-[#fde27a] text-black' : 'border-[#3f3f3f] bg-[#6a6a6a] text-[#e2e2e2]'
                            )}
                        >
                            <div className="h-[23px]">{c.id}</div>
                        </th>
                    ))}
                </tr>
            </thead>
            <tbody>
                <tr>
                    <th className="border-b border-r border-[#c58c2c] bg-[#fddb60] p-0 font-['Lato','Open_Sans',sans-serif] text-[15px] font-normal text-black">
                        <div className="-mb-px flex h-[66px] items-end justify-center">1</div>
                    </th>
                    {columns.map((c) => (
                        <td key={c.id} className={clsx('relative border-b border-r border-black bg-[#ffff99] p-0 font-bold', colourOf(c.id))}>
                            <div className="-mb-px flex h-[66px] items-end whitespace-pre pl-[3px]">{c.title}</div>
                            {c.id === 'AA' && (
                                <div className="absolute inset-px z-10 border border-[#000080]">
                                    <span className="absolute -right-[5px] -bottom-[5px] h-[5px] w-[5px] border border-white bg-[#00003c]" />
                                </div>
                            )}
                        </td>
                    ))}
                </tr>
                {rows.map((r) => (
                    <tr key={r.n}>
                        <th className={rowHead}>
                            <div className={clsx('-mb-px flex items-end justify-center', r.h)}>{r.n}</div>
                        </th>
                        {columns.map((c, i) => (
                            <td
                                key={c.id}
                                className={clsx(
                                    'border-b border-r border-black p-0',
                                    colourOf(c.id),
                                    isBold(c.id) && 'font-bold',
                                    c.id === 'AD' && r.cells[i] && 'bg-[#92d050]'
                                )}
                            >
                                <div className={clsx('-mb-px flex items-end whitespace-pre pl-[3px]', r.h)}>{r.cells[i]}</div>
                            </td>
                        ))}
                    </tr>
                ))}
                {emptyRows.map((n) => (
                    <tr key={n}>
                        <th className={rowHead}><div className="h-[21px]">{n}</div></th>
                        {columns.map((c) => (
                            <td key={c.id} className="border-b border-r border-[#d4d4d4] p-0" />
                        ))}
                    </tr>
                ))}
            </tbody>
        </table>
    </div>
);

const VerticalScroll = () => (
    <div className="flex w-[24px] shrink-0 border-r-4 border-[#5a5a5a] bg-[#666]">
        <div className="flex flex-1 flex-col items-center border-r border-[#333]">
            <div className="my-px h-[7px] w-[17px] border border-[#333] bg-[#999]" />
            <button aria-label="Scroll up" className="flex h-[23px] items-center">
                <svg viewBox="0 0 12 7" className="h-[7px] w-[12px]" fill="#2b2b2b"><path d="M6 0l6 7H0z" /></svg>
            </button>
            <div className="flex w-full flex-[659] items-center justify-center rounded-[2px] border border-[#2f2f2f] bg-linear-to-r from-[#747474] to-[#555]">
                <svg viewBox="0 0 7 8" className="h-[8px] w-[7px]" stroke="#aaa"><path d="M0 .5h7M0 2.500h7M0 4.500h7M0 6.500h7" /></svg>
            </div>
            <div className="flex-[75]" />
            <button aria-label="Scroll down" className="flex h-[21px] items-center">
                <svg viewBox="0 0 12 7" className="h-[7px] w-[12px]" fill="#2b2b2b"><path d="M6 7l6-7H0z" /></svg>
            </button>
        </div>
    </div>
);

/* ---------- sheet tabs ---------- */

const NavArrow = ({ label, d }: { label: string; d: string }) => (
    <button aria-label={label} className="flex w-[18px] justify-center">
        <svg viewBox="0 0 9 10" className="h-[10px] w-[9px]" fill="#bbb"><path d={d} /></svg>
    </button>
);

const SlantTab = ({ children, width }: { children: React.ReactNode; width: string }) => (
    <button className={clsx('relative -ml-[14px] flex h-[19px] items-center justify-center pr-[6px] leading-[19px] text-[#d8d8d8]', width)}>
        <svg viewBox="0 0 84 19" preserveAspectRatio="none" className="absolute inset-0 h-full w-full">
            <path d="M0 19c3 0 5-4 8-9l5-8 2-2h69c-3 0-5 3-7 7l-5 9c-1 2-3 3-5 3z" fill="#757575" stroke="#2b2b2b" />
        </svg>
        <span className="relative">{children}</span>
    </button>
);

const SheetTabs = () => (
    <div className="flex h-[20px] shrink-0 border-t border-[#2d2d2d] bg-[#686868]">
        <div className="flex w-[79px] items-center pl-[2px]">
            <NavArrow label="First sheet" d="M0 0h1v10H0zM8 0v10L2 5z" />
            <NavArrow label="Previous sheet" d="M7 0v10L1 5z" />
            <NavArrow label="Next sheet" d="M2 0v10l6-5z" />
            <NavArrow label="Last sheet" d="M1 0v10l6-5zM8 0h1v10H8z" />
        </div>
        <div className="flex text-[14px]">
            <button className="relative z-10 flex h-[19px] w-[80px] items-center pl-[9px] font-bold leading-[19px] text-[#333]">
                <svg viewBox="0 0 80 19" preserveAspectRatio="none" className="absolute inset-0 h-full w-full">
                    <path d="M0-1h80c-3 1-5 4-7 8l-4 8c-1 3-3 4-5 4H2c-1 0-2-1-2-2z" fill="#fff" />
                </svg>
                <span className="relative">Sheet1</span>
            </button>
            <SlantTab width="w-[83px]">Sheet2</SlantTab>
            <SlantTab width="w-[83px]">Sheet3</SlantTab>
            <SlantTab width="w-[50px]">
                <svg viewBox="0 0 17 15" className="h-[15px] w-[17px]">
                    <path d="M3 3h13v8l-3 3-2-2H3z" fill="#c6d2ee" stroke="#7284b5" strokeWidth=".8" />
                    <path d="M3.500 0v7M0 3.500h7M1 1l5 5M6 1L1 6" stroke="#e8962a" />
                </svg>
            </SlantTab>
        </div>
        <div className="ml-auto flex w-[781px] items-center pr-[24px]">
            <span className="h-[19px] w-[8px] border-2 border-[#8c8c8c] outline outline-[#333]" />
            <button aria-label="Scroll left" className="flex w-[22px] justify-center">
                <svg viewBox="0 0 6 12" className="h-[12px] w-[6px]" fill="#222"><path d="M6 0v12L0 6z" /></svg>
            </button>
            <div className="flex h-[19px] flex-[650] items-center justify-center rounded-[2px] border border-[#2d2d2d] bg-linear-to-b from-[#747474] to-[#5b5b5b]">
                <svg viewBox="0 0 8 7" className="h-[7px] w-[8px]" stroke="#aaa"><path d="M.5 0v7M2.500 0v7M4.500 0v7M6.500 0v7" /></svg>
            </div>
            <div className="flex-[52]" />
            <button aria-label="Scroll right" className="flex w-[16px]">
                <svg viewBox="0 0 6 12" className="h-[12px] w-[6px]" fill="#222"><path d="M0 0v12l6-6z" /></svg>
            </button>
            <span className="h-[19px] w-[9px] border-2 border-[#8c8c8c] outline outline-[#333]" />
        </div>
    </div>
);

/* ---------- status bar ---------- */

const ZoomButton = ({ label, d }: { label: string; d: string }) => (
    <button aria-label={label} className="flex h-[20px] w-[20px] items-center justify-center rounded-full border border-[#222] bg-linear-to-b from-[#d0d0d0] to-[#8a8a8a]">
        <svg viewBox="0 0 10 10" className="h-[10px] w-[10px]" stroke="#222" strokeWidth="2"><path d={d} /></svg>
    </button>
);

const StatusBar = () => (
    <div className="flex h-[27px] shrink-0 items-center justify-between border-t-2 border-[#2b2b2b] bg-linear-to-b from-[#4c4c4c] to-[#333] text-[#eee]">
        <span className="border-r border-[#111] pl-[8px] pr-[9px] leading-[22px]">Ready</span>
        <div className="flex items-center pr-[4px]">
            <button aria-label="Normal view" className="flex h-[24px] w-[23px] items-center justify-center rounded-[3px] border border-[#c89b3c] bg-[#ffe073]">
                <svg viewBox="0 0 16 12" className="h-[12px] w-[16px]" fill="#fff" stroke="#444"><path d="M.5.5h15v11H.5zM.5 4h15M.5 8h15M5.500.5v11M10.500.5v11" /></svg>
            </button>
            <button aria-label="Page layout view" className="flex w-[24px] justify-center">
                <svg viewBox="0 0 16 14" className="h-[14px] w-[16px]"><path d="M0 0h16v14H0z" fill="#9b9b9b" /><path d="M4 2h8v10H4z" fill="#fff" /><path d="M5.500 4.500h5M5.500 6.500h5M5.500 8.500h5" stroke="#777" /></svg>
            </button>
            <button aria-label="Page break preview" className="flex w-[24px] justify-center">
                <svg viewBox="0 0 16 14" className="h-[14px] w-[16px]"><path d="M0 0h16v14H0z" fill="#9b9b9b" /><path d="M2 0h3v7H2zM7 0h3v7H7z" fill="#fff" /><path d="M10 8h6v6h-6z" fill="#c9c9c9" /></svg>
            </button>
            <button className="w-[48px] text-center">100%</button>
            <ZoomButton label="Zoom out" d="M0 5h10" />
            <div className="relative flex h-[20px] w-[125px] items-center justify-center">
                <span className="h-px w-full bg-[#111] shadow-[0_1px_0_#777]" />
                <input type="range" aria-label="Zoom" min={10} max={190} defaultValue={100} className="absolute inset-0 w-full opacity-0" />
                <svg viewBox="0 0 10 14" className="pointer-events-none absolute h-[14px] w-[10px]" fill="#bdbdbd" stroke="#333"><path d="M.5.5h9v9L7 13.500H3L.5 9.500z" /></svg>
            </div>
            <ZoomButton label="Zoom in" d="M0 5h10M5 0v10" />
        </div>
    </div>
);

/* ---------- taskbar ---------- */

const Taskbar = () => (
    <footer className="relative flex h-[48px] shrink-0 items-center justify-between overflow-hidden bg-linear-to-r from-[#3f7f9d] via-[#4690b4] to-[#40809a] text-white">
        <svg viewBox="0 0 500 48" preserveAspectRatio="none" className="absolute left-[53%] h-full w-[500px]">
            <path d="M0 0h60l60 48h-30z" fill="#fff" opacity=".05" />
            <path d="M164 0h10l50 48h-6z" fill="#fff" opacity=".09" />
            <path d="M220 0h40l180 48H300z" fill="#fff" opacity=".05" />
        </svg>
        <div className="relative flex items-center pl-[10px]">
            <button aria-label="Start" className="w-[46px]">
                <svg viewBox="0 0 44 44" className="h-[44px] w-[44px]">
                    <circle cx="22" cy="22" r="21" fill="#1e4d63" stroke="#b8ccd6" strokeWidth="1.500" />
                    <path d="M3 18a19 19 0 0 1 38 0c-8-5-30-5-38 0z" fill="#7fa5b6" opacity=".6" />
                    <path d="M14 34v-4c-5-1-8-5-6-9-1-4 2-7 5-7 1-4 4-5 7-4 1.500-1.500 3.500-1.500 5 0 3-1 6 0 7 4 3 0 6 3 5 7 2 4-1 8-6 9v4z" fill="#3c8790" stroke="#f5d04a" strokeWidth="1.800" />
                    <path d="M10 19c-1-4 3-6 5-5 0-4 4-5 6-3 2-2 4-1 5 1 3-1 5 1 5 3 3 0 5 2 4 5" fill="none" stroke="#ef8a3c" strokeWidth="1.600" />
                    <path d="M22 30V16M18 29l-4-10M26 29l4-10M15 29l-5-6M29 29l5-6" stroke="#7fc0bf" strokeWidth=".8" />
                </svg>
            </button>
            <button aria-label="Internet Explorer" className="flex w-[84px] justify-center pl-[8px]">
                <svg viewBox="0 0 38 38" className="h-[38px] w-[38px]">
                    <path d="M35 21.500H13c0 4 3 6.500 7 6.500 3 0 5-1 6.500-3.500h7.500C32 31 27 35 20 35 11 35 5 29 5 20.500S11 5 20 5c10 0 16 7 15 16.500zM13.500 16.500h13.500c-.5-3.500-3-5.500-6.500-5.500s-6.500 2-7 5.500z" fill="#5cc8f5" stroke="#2a8fcb" strokeWidth=".8" />
                    <path d="M35 12c3-8 0-12-8-9C17 6.500 5 19 2 29c-2 7 2 9 9 5" fill="none" stroke="#f3c52f" strokeWidth="3.200" />
                </svg>
            </button>
            <button aria-label="File Explorer" className="mr-[4px] flex h-[46px] w-[66px] items-center justify-center border border-[#a9c7d6] bg-[#6e9fb7]">
                <svg viewBox="0 0 40 38" className="h-[38px] w-[40px]">
                    <path d="M1 2h12l2 3h22l2 3v28H1z" fill="#e8c969" />
                    <path d="M4 1h8v5H4zM14 3h9v5h-9zM25 5h10v5H25z" fill="#fff" />
                    <path d="M6 2h4v2H6z" fill="#3ba142" /><path d="M15 5h3v2h-3z" fill="#d83a2e" /><path d="M26 7h3v2h-3z" fill="#3a6fd0" />
                    <path d="M1 9h38v27H1z" fill="#f6e08f" />
                    <path d="M6 37V25c0-2 1-3 3-3h22c2 0 3 1 3 3v12h-6v-6H13v6z" fill="#8cc8e8" stroke="#5ca4cd" strokeWidth=".8" />
                </svg>
            </button>
            <button aria-label="Firefox" className="mr-[4px] flex h-[46px] w-[66px] items-center justify-center border border-[#a9c7d6] bg-[#6397b3]">
                <svg viewBox="0 0 38 38" className="h-[38px] w-[38px]">
                    <circle cx="20" cy="17" r="16" fill="#1f5fa8" />
                    <path d="M12 4c5-4 15-3 18 3-3-1-4 1-6 2-3 1-8 0-12-5z" fill="#4fa3dd" />
                    <path d="M2 12c1-3 2-5 4-7 0 2 1 3 2 4 3-1 6 0 8 1-1 2-3 3-5 4 0 5 4 9 9 9 4 0 8-2 10-6 1-4 0-9-2-13 6 4 9 10 8 17-1 9-9 15-17 15C9 36 1 29 1 19c0-3 0-5 1-7z" fill="#e8641b" />
                    <path d="M30 5c6 5 7 12 5 18-2 5-5 8-9 9 6-6 8-15 4-27z" fill="#fbc52e" />
                    <path d="M3 22c4 7 12 9 18 7-3 5-10 6-14 2-2-2-4-6-4-9z" fill="#c8401a" />
                </svg>
            </button>
            <button aria-label="Microsoft Excel" className="flex h-[46px] w-[66px] items-center justify-center border-2 border-[#e4eff4] bg-[#94b8c9]">
                <svg viewBox="0 0 38 38" className="h-[38px] w-[38px]">
                    <path d="M5 1h31v35H1V5z" fill="#d8edd2" stroke="#3f9343" />
                    <path d="M24 3h10v16H24z" fill="#64b364" />
                    <path d="M16 18l22 5-3 14H12l-2-10z" fill="#fff" />
                    <path d="M17 22l17 4M16 26l17 4M14 30l18 4M21 20l-5 15M28 21l-4 15" stroke="#5fae62" strokeWidth="1.200" />
                    <path d="M4 6h8l12 20h-8z" fill="#1e7a30" />
                    <path d="M18 6h5L10 27H4z" fill="#5aa52c" />
                </svg>
            </button>
        </div>

        <div className="relative flex items-center text-[14px] leading-[22px]">
            <button aria-label="Show hidden icons" className="mr-[20px]">
                <svg viewBox="0 0 10 6" className="h-[6px] w-[10px]" fill="#fff"><path d="M5 0l5 6H0z" /></svg>
            </button>
            <svg viewBox="0 0 20 20" className="mr-[18px] h-[20px] w-[19px]" fill="#fff" stroke="#1f3f50" strokeWidth=".8">
                <path d="M1 1h2v18H1z" /><path d="M3 2c3-1 6-1 8 1v2c3 2 5 2 8 1-1 3-3 6-8 5v-1c-3-1-5-1-8 0z" />
            </svg>
            <svg viewBox="0 0 12 20" className="mr-[10px] h-[20px] w-[12px]" fill="none" stroke="#fff" strokeWidth="1.500">
                <path d="M1 3h10v16H1z" /><path d="M4 1h4" strokeWidth="2" /><path d="M3 12h6v5H3z" fill="#fff" stroke="none" />
            </svg>
            <svg viewBox="0 0 18 18" className="mr-[14px] h-[18px] w-[17px]" fill="#fff" stroke="#1f3f50" strokeWidth=".5">
                <path d="M0 15h3v3H0zM4 12h2.500v6H4zM8 8h2.500v10H8zM11.500 4H14v14h-2.500zM15 0h2.500v18H15z" />
            </svg>
            <svg viewBox="0 0 18 20" className="mr-[19px] h-[20px] w-[18px]" fill="#fff">
                <path d="M1 6h3v8H1zM5 6l5-5v18l-5-5z" /><path d="M13 6c2 2 2 6 0 8" fill="none" stroke="#fff" />
            </svg>
            <button className="mr-[8px] w-[38px] text-left">ENG</button>
            <time className="mr-[25px] w-[68px] whitespace-nowrap text-center">10:58 PM<br />2/17/2016</time>
        </div>
    </footer>
);

export default function App() {
    return (
        <div className="flex h-screen flex-col overflow-hidden font-['Open_Sans','Noto_Sans',sans-serif] text-[13px]">
            <TitleBar />
            <Ribbon />
            <FormulaBar />
            <main className="flex min-h-0 flex-1">
                <Sheet />
                <VerticalScroll />
            </main>
            <SheetTabs />
            <StatusBar />
            <Taskbar />
        </div>
    );
}
